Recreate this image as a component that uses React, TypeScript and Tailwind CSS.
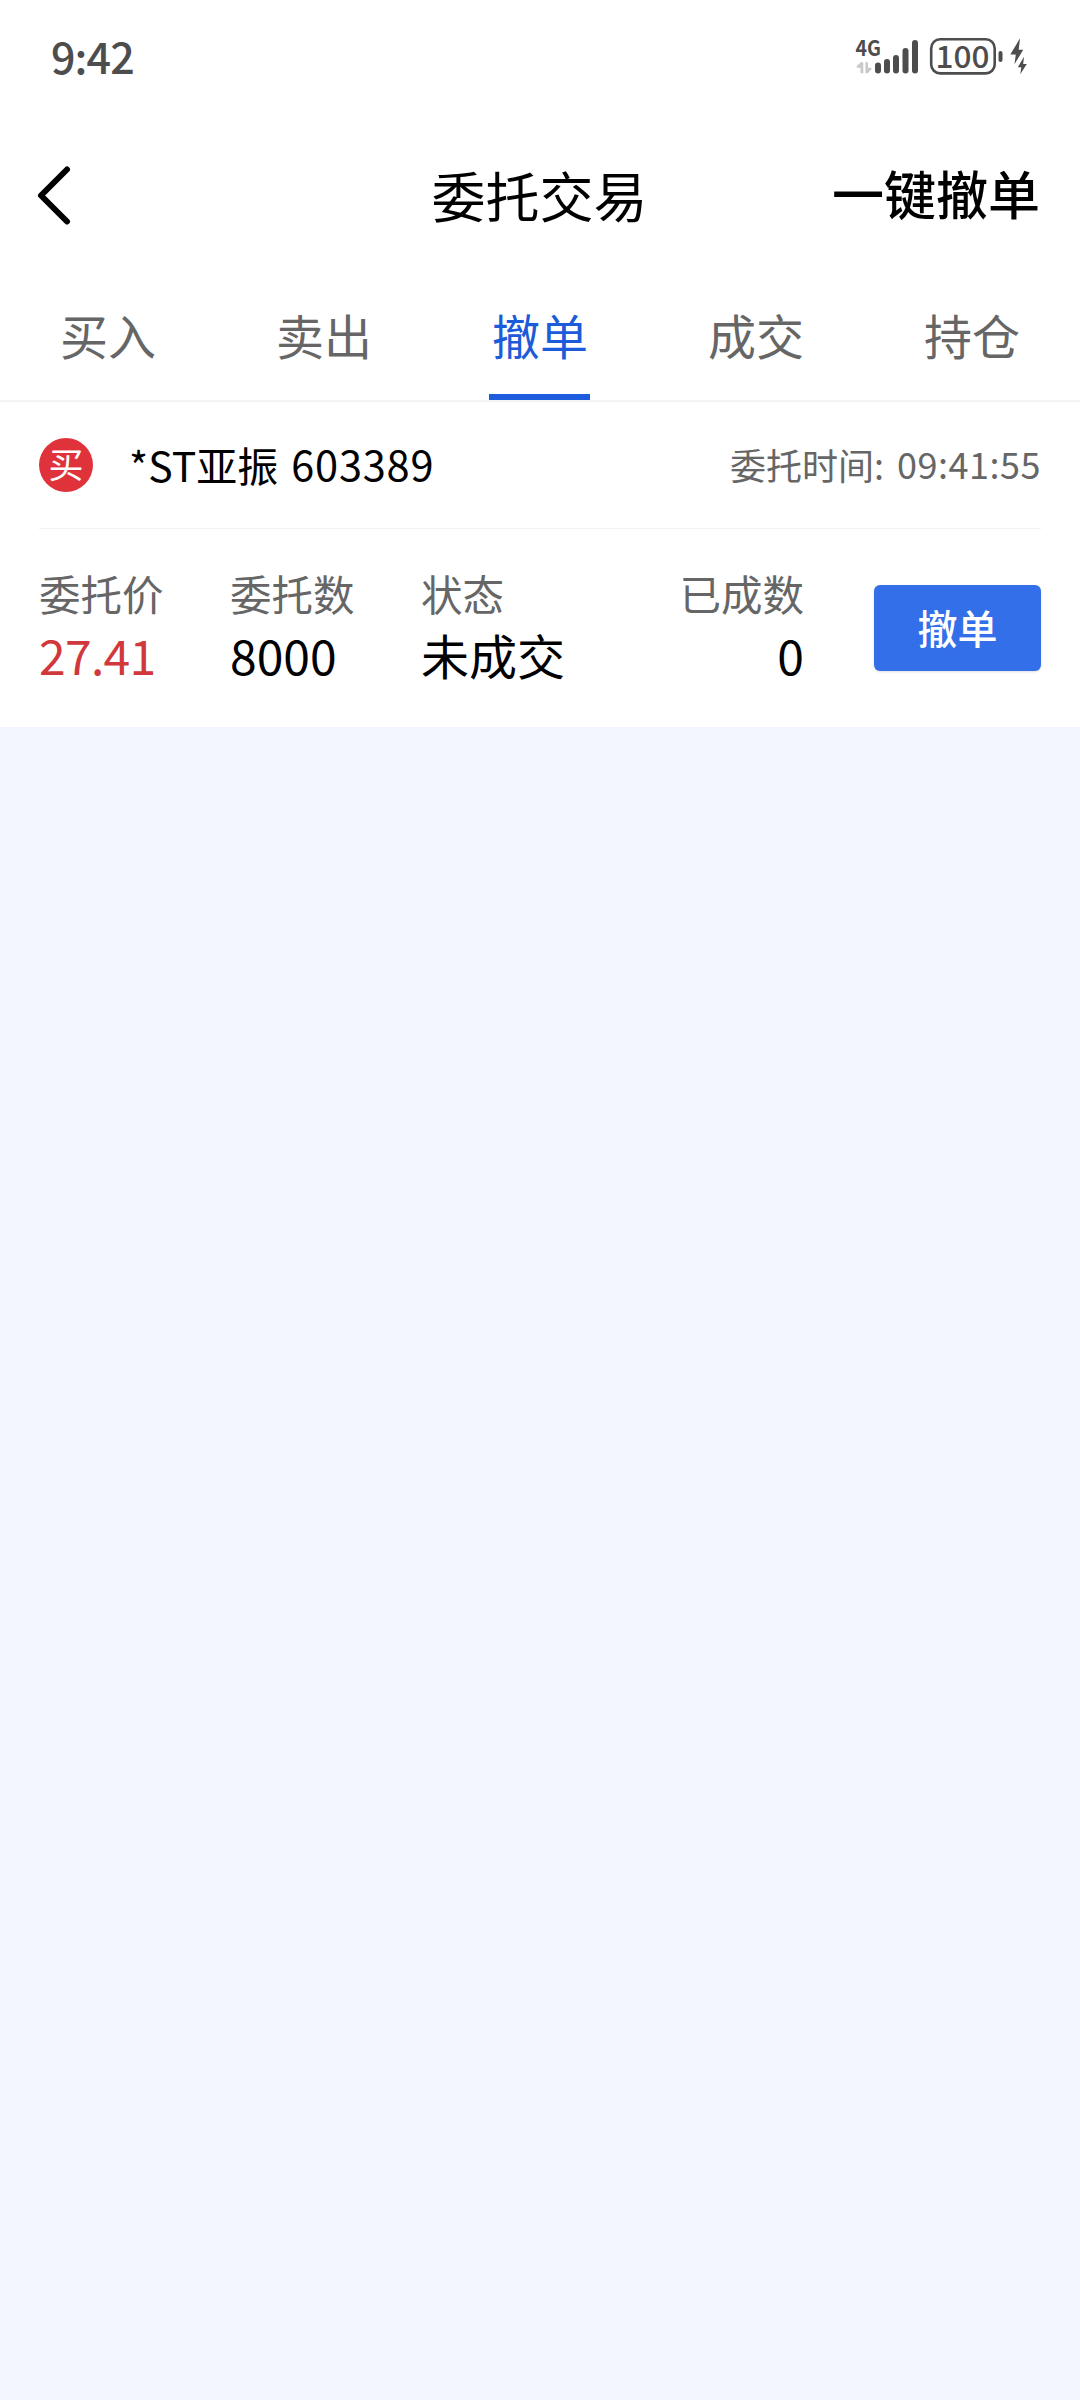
import clsx from "clsx"

interface OrderProps {
  name: string
  code: string
  time: string
  price: string
  amount: string
  status: string
  filled: string
}

const tabs = ["买入", "卖出", "撤单", "成交", "持仓"]

const orders: OrderProps[] = [
  {
    name: "*ST亚振",
    code: "603389",
    time: "09:41:55",
    price: "27.41",
    amount: "8000",
    status: "未成交",
    filled: "0",
  },
]

function StatusBar() {
  return (
    <div className="flex h-28 items-start justify-between pl-[51px] pr-[50px] text-[#4d4d4d]">
      <span className="mt-[29px] text-[43px] font-medium leading-[52px] tracking-[-0.9px]">
        9:42
      </span>

      <svg
        width="176"
        height="70"
        viewBox="854 20 176 70"
        className="mt-5"
        fill="currentColor"
      >
        <text
          x="855.5"
          y="56"
          fontSize="21.5"
          fontWeight="700"
          textLength="25.5"
          lengthAdjust="spacingAndGlyphs"
        >
          4G
        </text>
        <path
          d="M863.300 62.300v11h-2.800v-5.500h-3.800v-1.500l4-4zM865.400 62.300h2.600v5.500h3.400v1.500l-3.600 4h-2.400z"
          fill="#c9c9c9"
        />
        <rect x="875" y="62.5" width="6" height="11" rx="3" />
        <rect x="884" y="59" width="6" height="14.5" rx="3" />
        <rect x="893" y="55" width="6" height="18.5" rx="3" />
        <rect x="902.5" y="48" width="6" height="25.5" rx="3" />
        <rect x="912" y="40" width="6" height="33.5" rx="3" />
        <rect
          x="931.2"
          y="39.2"
          width="63.5"
          height="34.2"
          rx="9"
          fill="none"
          stroke="currentColor"
          strokeWidth="2.6"
        />
        <text
          x="935.5"
          y="67.6"
          fontSize="30.5"
          fontWeight="500"
          textLength="54"
          lengthAdjust="spacingAndGlyphs"
        >
          100
        </text>
        <rect x="998.5" y="51" width="4" height="11" rx="2" />
        <path d="M1020 38.300L1010.300 54.500h5.500l-1.300 9.700 8.700-14.500h-4.500z" />
        <path d="M1024 56.700L1017.800 67.300h3.500l-1 7 6.500-10.300h-3.600z" />
      </svg>
    </div>
  )
}

function Header() {
  return (
    <header className="grid h-[168px] grid-cols-[300px_1fr_300px] items-start pl-9 pr-10 text-black">
      <svg
        width="36"
        height="60"
        viewBox="0 0 36 60"
        className="mt-[53px]"
        fill="none"
        stroke="currentColor"
        strokeWidth="6"
        strokeLinecap="round"
        strokeLinejoin="round"
      >
        <path d="M31 4.500L5 30.500l26 26" />
      </svg>
      <h1 className="mt-[51px] pl-[3px] text-center text-[54px] leading-[64px]">
        委托交易
      </h1>
      <button className="mt-[49px] text-right text-[52px] font-medium leading-[64px]">
        一键撤单
      </button>
    </header>
  )
}

function Order({
  name,
  code,
  time,
  price,
  amount,
  status,
  filled,
}: OrderProps) {
  return (
    <section className="h-[325px] bg-white px-[39px] text-black">
      <div className="flex h-[127px] items-center border-b border-[#f2f2f2]">
        <span className="flex size-[54px] items-center justify-center rounded-full bg-[#e0323a] pb-[5px] text-[35px] leading-none text-white">
          买
        </span>
        <span className="-mt-[3px] ml-9 text-[41px] leading-[54px]">{name}</span>
        <span className="-mt-1 ml-[13px] text-[41.500px] leading-[54px] tracking-[0.8px]">
          {code}
        </span>
        <span className="-mt-[3px] ml-auto text-[36px] leading-[54px] text-[#666]">
          委托时间:
        </span>
        <span className="-mt-1 ml-[13px] text-[36px] leading-[54px] tracking-[0.5px] text-[#666]">
          {time}
        </span>
      </div>

      <div className="flex pt-8">
        <dl className="grid w-[765px] grid-cols-[191px_191px_191px_1fr] text-5xl leading-[58px]">
          <div>
            <dt className="text-[41.500px] leading-[64px] text-[#666]">委托价</dt>
            <dd className="tracking-[-0.7px] text-[#d0383c]">{price}</dd>
          </div>
          <div>
            <dt className="text-[41.500px] leading-[64px] text-[#666]">委托数</dt>
            <dd>{amount}</dd>
          </div>
          <div>
            <dt className="text-[41.500px] leading-[64px] text-[#666]">状态</dt>
            <dd>{status}</dd>
          </div>
          <div className="text-right">
            <dt className="text-[41.500px] leading-[64px] text-[#666]">已成数</dt>
            <dd>{filled}</dd>
          </div>
        </dl>
        <button className="ml-auto mt-6 h-[86px] w-[167px] rounded-md bg-[#336fe8] pb-0.5 text-[40px] font-medium leading-none text-white shadow-sm">
          撤单
        </button>
      </div>
    </section>
  )
}

export default function App() {
  return (
    <div className="min-h-[2400px] w-[1080px] bg-[#f3f6ff] font-['Noto_Sans_CJK_SC',sans-serif]">
      <div className="h-[402px] border-b-2 border-[#f3f4f5] bg-white">
        <StatusBar />
        <Header />

        <nav className="grid h-[120px] grid-cols-5">
          {tabs.map(tab => (
            <div
              key={tab}
              className={clsx(
                "flex flex-col items-center justify-between pt-[22px] text-5xl leading-[64px]",
                tab === "撤单" ? "text-[#1c5bd9]" : "text-[#666]",
              )}
            >
              {tab}
              {tab === "撤单" && (
                <span className="mr-0.5 h-1.5 w-[101px] bg-[#1c5cdd]" />
              )}
            </div>
          ))}
        </nav>
      </div>

      {orders.map((order, i) => (
        <Order
          key={i}
          {...order}
        />
      ))}
    </div>
  )
}
